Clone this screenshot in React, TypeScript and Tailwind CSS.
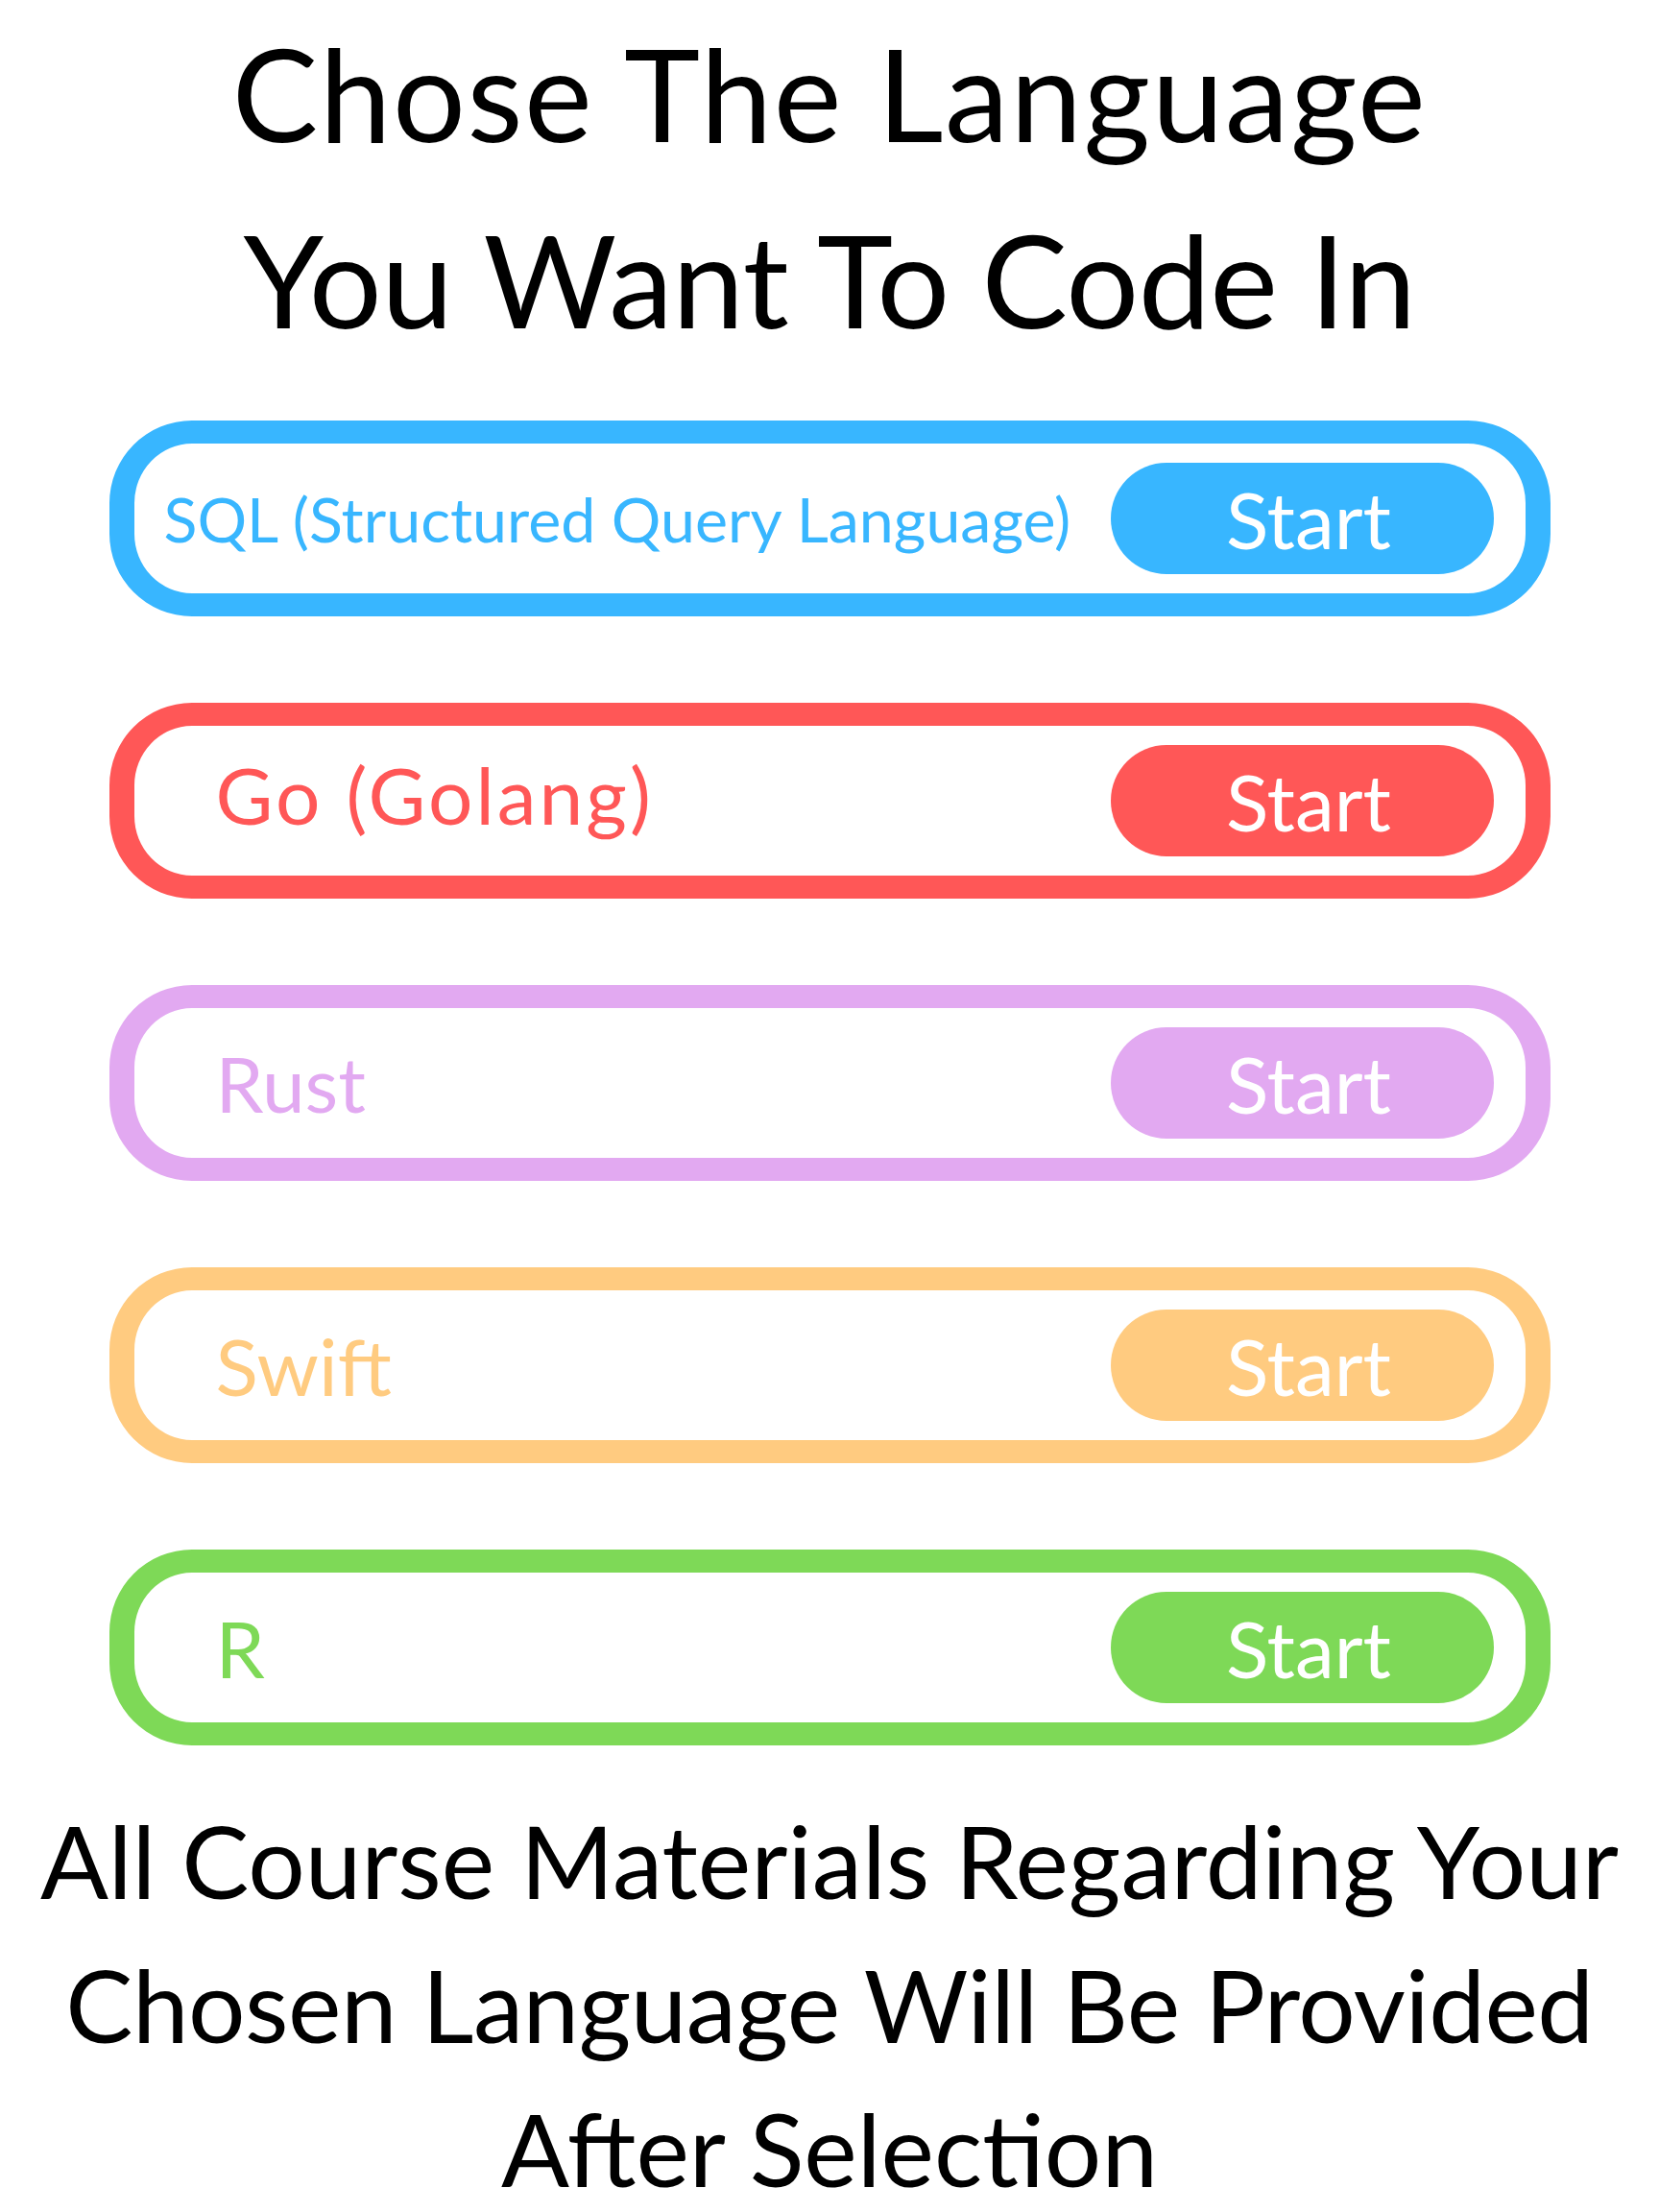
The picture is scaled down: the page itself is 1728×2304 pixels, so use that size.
const languages = [
  { name: "SQL (Structured Query Language)", border: "border-[#38b6ff]", text: "text-[#38b6ff]", bg: "bg-[#38b6ff]", label: "pl-[31px] text-[64.5px]" },
  { name: "Go (Golang)", border: "border-[#ff5757]", text: "text-[#ff5757]", bg: "bg-[#ff5757]", label: "pl-[85px] mb-[14px] text-[82px] tracking-[3px]" },
  { name: "Rust", border: "border-[#e2a9f1]", text: "text-[#e2a9f1]", bg: "bg-[#e2a9f1]", label: "pl-[85px] text-[80px]" },
  { name: "Swift", border: "border-[#ffcb80]", text: "text-[#ffcb80]", bg: "bg-[#ffcb80]", label: "pl-[85px] text-[82px]" },
  { name: "R", border: "border-[#7ed957]", text: "text-[#7ed957]", bg: "bg-[#7ed957]", label: "pl-[85px] text-[82px]" },
];

export default function App() {
  return (
    <div className="w-[1728px] bg-white font-['Lato',sans-serif] text-black">
      <h1 className="text-center text-[134px] leading-[194px] font-normal">
        <span className="tracking-[1.5px]">Chose The Language</span>
        <br />
        <span className="tracking-[-0.5px]">You Want To Code In</span>
      </h1>

      <div className="mt-[50px] flex flex-col gap-[90px]">
        {languages.map((l) => (
          <div
            key={l.name}
            className={`mx-auto flex h-[204px] w-[1501px] items-center justify-between rounded-[86px] border-x-[26px] border-y-[24px] pr-[33px] ${l.border}`}
          >
            <span className={`${l.label} ${l.text} leading-none`}>{l.name}</span>
            <button
              type="button"
              className={`flex h-[116px] w-[399px] items-center justify-center rounded-full pl-[14px] text-[82px] leading-none text-white ${l.bg}`}
            >
              Start
            </button>
          </div>
        ))}
      </div>

      <p className="mt-[44px] text-center text-[105px] leading-[150px]">
        All Course Materials Regarding Your
        <br />
        <span className="tracking-[-0.5px]">Chosen Language Will Be Provided</span>
        <br />
        After Selection
      </p>
    </div>
  );
}
